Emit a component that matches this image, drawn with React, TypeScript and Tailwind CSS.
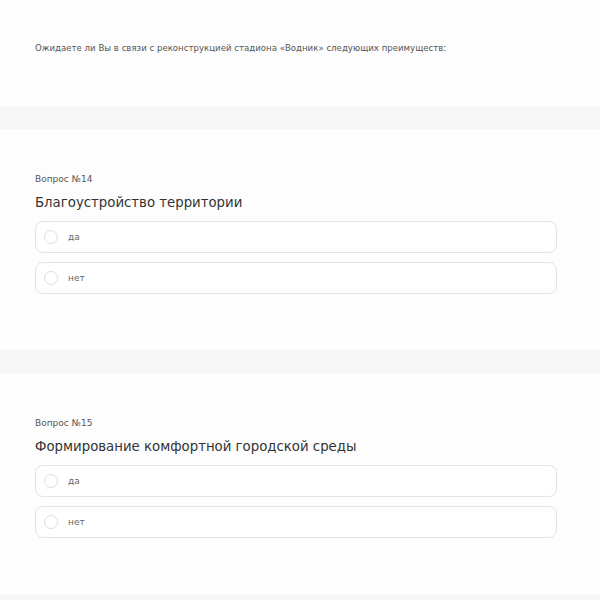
import React from "react";

const font = { fontFamily: "'DejaVu Sans', 'Noto Sans', sans-serif" };

function Option({ label }: { label: string }) {
  return (
    <div className="flex h-[32px] items-center rounded-[8px] border border-[#e3e3e3] bg-white pl-[8px]">
      <span className="h-[14px] w-[14px] rounded-full border border-[#dedede] bg-white" />
      <span className="ml-[10px] text-[9px] leading-[14px] text-[#666]">{label}</span>
    </div>
  );
}

function Question({ n, title }: { n: number; title: string }) {
  return (
    <section className="h-[221px] bg-[#fdfdfd] px-[35px] pt-[43px]">
      <div className="text-[9px] leading-[14px] text-[#555]">Вопрос №{n}</div>
      <h2 className="mt-[7px] text-[13.3px] leading-[20px] text-[#333]">{title}</h2>
      <div className="mr-[8px] mt-[8px] flex flex-col gap-[9px]">
        <Option label="да" />
        <Option label="нет" />
      </div>
    </section>
  );
}

export default function App() {
  return (
    <div className="h-[600px] w-[600px] overflow-hidden bg-[#fdfdfd]" style={font}>
      <section className="h-[106px] px-[35px] pt-[41px]">
        <p className="text-[8.6px] leading-[14px] text-[#555]">
          Ожидаете ли Вы в связи с реконструкцией стадиона «Водник» следующих преимуществ:
        </p>
      </section>
      <div className="h-[23px] bg-[#f6f6f6]" />
      <Question n={14} title="Благоустройство территории" />
      <div className="h-[23px] bg-[#f6f6f6]" />
      <Question n={15} title="Формирование комфортной городской среды" />
      <div className="h-[7px] bg-[#f6f6f6]" />
    </div>
  );
}
